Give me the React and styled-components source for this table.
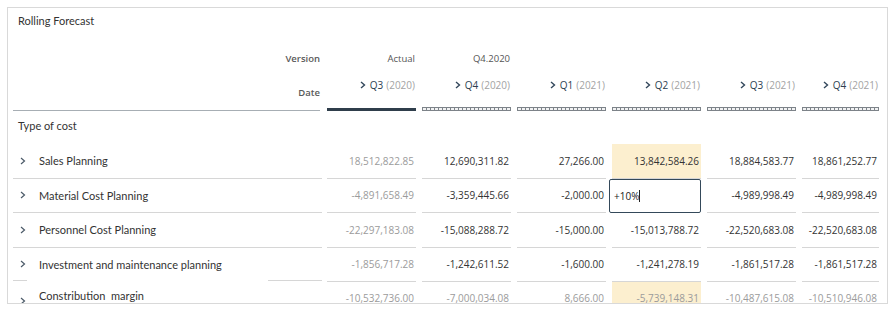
import React from "react";
import styled, { createGlobalStyle } from "styled-components";

const COLS = "309px 95px 95px 95px 95px 95px 83px";

const columns = [
    { q: "Q3", year: "2020", version: "Actual", bar: "solid" },
    { q: "Q4", year: "2020", version: "Q4.2020", bar: "hatch" },
    { q: "Q1", year: "2021", bar: "hatch" },
    { q: "Q2", year: "2021", bar: "hatch" },
    { q: "Q3", year: "2021", bar: "hatch" },
    { q: "Q4", year: "2021", bar: "hatch" },
];

const rows = [
    {
        label: "Sales Planning",
        values: ["18,512,822.85", "12,690,311.82", "27,266.00", "13,842,584.26", "18,884,583.77", "18,861,252.77"],
        highlight: [3],
    },
    {
        label: "Material Cost Planning",
        values: ["-4,891,658.49", "-3,359,445.66", "-2,000.00", "+10%", "-4,989,998.49", "-4,989,998.49"],
        editing: 3,
    },
    {
        label: "Personnel Cost Planning",
        values: ["-22,297,183.08", "-15,088,288.72", "-15,000.00", "-15,013,788.72", "-22,520,683.08", "-22,520,683.08"],
    },
    {
        label: "Investment and maintenance planning",
        values: ["-1,856,717.28", "-1,242,611.52", "-1,600.00", "-1,241,278.19", "-1,861,517.28", "-1,861,517.28"],
        patched: true,
    },
    {
        label: "Constribution\u00a0 margin",
        values: ["-10,532,736.00", "-7,000,034.08", "8,666.00", "-5,739,148.31", "-10,487,615.08", "-10,510,946.08"],
        highlight: [3],
        muted: true,
        raised: true,
    },
];

function Chevron() {
    return (
        <ChevronSvg width="6" height="8" viewBox="0 0 6 8">
            <polyline points="1,1 4.5,4 1,7" fill="none" stroke="#4b5a68" strokeWidth="1.2" />
        </ChevronSvg>
    );
}

function App() {
    return (
        <>
            <GlobalStyle />
            <Panel>
                <Title>Rolling Forecast</Title>
                <Row h={18}>
                    <HeadLabel>Version</HeadLabel>
                    {columns.map((c, i) => (
                        <VersionCell key={i}>{c.version || ""}</VersionCell>
                    ))}
                </Row>
                <Row h={36}>
                    <HeadLabel date>Date</HeadLabel>
                    {columns.map((c, i) => (
                        <PeriodCell key={i}>
                            <HeadChevron width="6" height="8" viewBox="0 0 6 8">
                                <polyline points="1,1 4.5,4 1,7" fill="none" stroke="#32475b" strokeWidth="1.4" />
                            </HeadChevron>
                            <Quarter>{c.q}</Quarter>
                            <Year>({c.year})</Year>
                        </PeriodCell>
                    ))}
                </Row>
                <BarRow>
                    <LabelRule />
                    {columns.map((c, i) => (
                        <BarCell key={i}>
                            <Bar kind={c.bar} />
                        </BarCell>
                    ))}
                </BarRow>
                <Row h={34}>
                    <SectionLabel>Type of cost</SectionLabel>
                </Row>
                {rows.map((r, ri) => (
                    <Row key={ri} h={34.5}>
                        <LabelCell patched={r.patched}>
                            <LabelInner raised={r.raised}>
                                <Chevron />
                                <LabelText raised={r.raised}>{r.label}</LabelText>
                            </LabelInner>
                        </LabelCell>
                        {r.values.map((v, ci) => (
                            <DataCell key={ci}>
                                {r.editing === ci ? (
                                    <EditBox>
                                        {v}
                                        <Caret />
                                    </EditBox>
                                ) : (
                                    <Value
                                        highlight={r.highlight && r.highlight.includes(ci)}
                                        muted={r.muted || ci === 0}
                                        raised={r.raised}
                                    >
                                        {v}
                                    </Value>
                                )}
                            </DataCell>
                        ))}
                    </Row>
                ))}
            </Panel>
        </>
    );
}

export default App;

// styled components
const GlobalStyle = createGlobalStyle`
    body {
        margin: 0;
        background: #fff;
        font-family: Lato, "Open Sans", sans-serif;
    }
`;

const Panel = styled.div`
    box-sizing: border-box;
    margin: 7px 0 0 7px;
    width: 881px;
    height: 297px;
    border: 1px solid #d9d9d9;
    padding-left: 5px;
    overflow: hidden;
`;

const Title = styled.div`
    padding: 5px 0 0 5px;
    margin-bottom: 21px;
    font-size: 11px;
    line-height: 16px;
    color: #333;
`;

const Row = styled.div`
    display: grid;
    grid-template-columns: ${COLS};
    height: ${(p) => p.h}px;
`;

const HeadLabel = styled.div`
    text-align: right;
    padding-right: 2px;
    padding-top: ${(p) => (p.date ? "19px" : "0")};
    font-family: "Open Sans", sans-serif;
    font-size: 9.5px;
    font-weight: 600;
    color: #5a5a5a;
    line-height: 12px;
    align-self: ${(p) => (p.date ? "start" : "center")};
`;

const VersionCell = styled.div`
    text-align: right;
    padding-right: 2px;
    font-family: "Open Sans", sans-serif;
    font-size: 9.5px;
    color: #555;
    line-height: 18px;
`;

const PeriodCell = styled.div`
    display: flex;
    justify-content: flex-end;
    align-items: center;
    padding: 11px 2px 0 0;
    height: 12px;
    font-family: "Open Sans", sans-serif;
    font-size: 10px;
`;

const HeadChevron = styled.svg`
    margin-right: 4px;
`;

const Quarter = styled.span`
    color: #2c3e50;
    font-weight: 500;
    margin-right: 3px;
`;

const Year = styled.span`
    color: #a3a3a3;
`;

const BarRow = styled.div`
    display: grid;
    grid-template-columns: ${COLS};
    margin-top: 3px;
    height: 3px;
    align-items: center;
`;

const LabelRule = styled.div`
    height: 1px;
    margin-right: 2px;
    margin-top: 2px;
    background: #a7aeb4;
`;

const BarCell = styled.div`
    padding: 0 1px 0 5px;
`;

const Bar = styled.div`
    box-sizing: border-box;
    height: ${(p) => (p.kind === "solid" ? "3px" : "4px")};
    background: ${(p) =>
        p.kind === "solid"
            ? "#2f3e4b"
            : "repeating-linear-gradient(90deg, #7d8389 0 1px, #f2f3f4 1px 4px)"};
    border-top: ${(p) => (p.kind === "solid" ? "none" : "1px solid #7d8389")};
    border-bottom: ${(p) => (p.kind === "solid" ? "none" : "1px solid #7d8389")};
`;

const SectionLabel = styled.div`
    display: flex;
    align-items: center;
    padding: 0 0 3px 5px;
    font-size: 11px;
    color: #333;
`;

const LabelCell = styled.div`
    box-sizing: border-box;
    border-bottom: 1px solid ${(p) => (p.patched ? "transparent" : "#d6d6d6")};
    background: ${(p) =>
        p.patched
            ? "linear-gradient(90deg, #d6d6d6 14px, transparent 14px 255px, #d6d6d6 255px) bottom / 100% 1px no-repeat"
            : "none"};
`;

const LabelInner = styled.div`
    height: 100%;
    display: flex;
    align-items: center;
    padding-left: 7px;
    padding-top: ${(p) => (p.raised ? "5px" : "0")};
    box-sizing: border-box;
`;

const ChevronSvg = styled.svg`
    flex: none;
    margin-right: 13px;
`;

const LabelText = styled.span`
    font-size: 11px;
    color: #333;
    position: relative;
    top: ${(p) => (p.raised ? "-6px" : "0")};
`;

const DataCell = styled.div`
    padding: 0 1px 0 5px;
`;

const Value = styled.div`
    box-sizing: border-box;
    height: 100%;
    display: flex;
    align-items: center;
    justify-content: flex-end;
    padding: 0 2px ${(p) => (p.raised ? "2px" : "0")} 0;
    border-bottom: 1px solid #d6d6d6;
    background: ${(p) => (p.highlight ? "#fcefcf" : "transparent")};
    font-family: "Open Sans", sans-serif;
    font-size: 10px;
    color: ${(p) => (p.muted ? "#9b9b9b" : "#333")};
`;

const EditBox = styled.div`
    box-sizing: border-box;
    height: 100%;
    margin-left: -3px;
    display: flex;
    align-items: center;
    padding-left: 4px;
    border: 1.5px solid #34495a;
    border-radius: 2px;
    background: #fff;
    font-family: "Open Sans", sans-serif;
    font-size: 10px;
    color: #222;
`;

const Caret = styled.span`
    display: inline-block;
    width: 1px;
    height: 12px;
    background: #222;
`;
